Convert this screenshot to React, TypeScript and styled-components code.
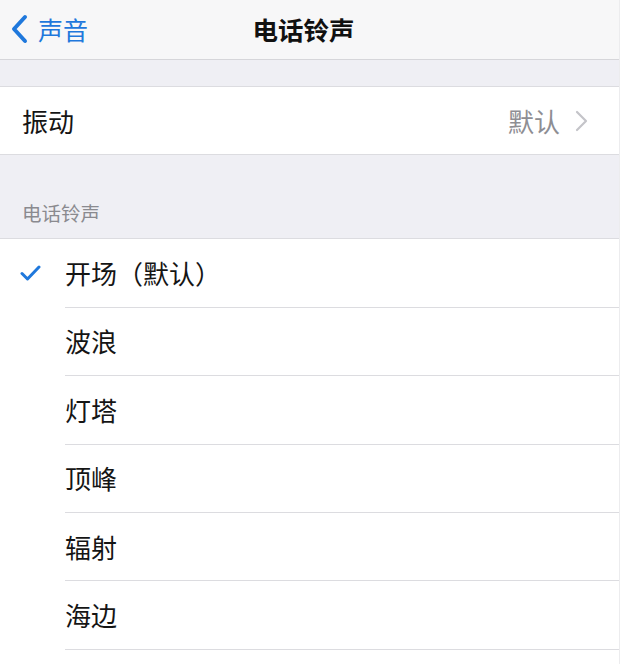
import React from 'react';
import styled, { createGlobalStyle } from 'styled-components';

const GlobalStyle = createGlobalStyle`
  html, body {
    margin: 0;
    padding: 0;
    background: #fff;
  }
  body {
    font-family: "Noto Sans CJK SC", "Noto Sans", sans-serif;
    -webkit-font-smoothing: antialiased;
  }
`;

// Styles
const Screen = styled.div`
  width: 619px;
  height: 664px;
  background: #efeff4;
  border-right: 1px solid #ececee;
  overflow: hidden;
`;

const NavBar = styled.div`
  height: 59px;
  background: #f7f7f8;
  border-bottom: 1px solid #d6d6da;
  display: grid;
  grid-template-columns: 1fr auto 1fr;
  align-items: center;
`;

const BackButton = styled.a`
  display: flex;
  align-items: center;
  gap: 9px;
  padding-left: 9px;
  color: #1f78dc;
  font-size: 25px;
  text-decoration: none;
  line-height: 1;
  margin-top: -1px;

  svg {
    width: 20px;
    height: 30px;
  }
`;

const Title = styled.div`
  font-size: 25.5px;
  font-weight: 700;
  color: #111;
  margin-top: -2px;
  transform: translateX(-6px);
`;

const Spacer = styled.div<{ $h: number }>`
  height: ${(p) => p.$h}px;
`;

const Group = styled.div`
  background: #fff;
  border-top: 1px solid #dcdce0;
  border-bottom: 1px solid #dcdce0;
`;

const SectionHeader = styled.div`
  height: 83px;
  display: flex;
  align-items: flex-end;
  padding: 0 0 11px 22px;
  box-sizing: border-box;
  font-size: 19.5px;
  color: #8a8a8f;
`;

const Row = styled.div<{ $inset: number }>`
  display: flex;
  align-items: center;
  height: 67.4px;
  padding-left: ${(p) => p.$inset}px;
  padding-right: 31px;
  font-size: 26px;
  color: #151515;
  position: relative;

  & + &::before {
    content: '';
    position: absolute;
    top: -1px;
    left: ${(p) => p.$inset}px;
    right: 0;
    height: 1px;
    background: #dcdce0;
  }

  & + & {
    margin-top: 1px;
  }
`;

const Label = styled.span`
  flex: 1;
  margin-top: -1px;
`;

const Detail = styled.span`
  color: #8e8e93;
  font-size: 26px;
  margin-right: 15px;
`;

const Check = styled.span`
  position: absolute;
  left: 20px;
  top: 50%;
  transform: translateY(-50%);
  display: flex;

  svg {
    width: 21px;
    height: 16px;
  }
`;

const Chevron = () => (
  <svg width="13" height="22" viewBox="0 0 13 22">
    <path d="M2 2 L11 11 L2 20" fill="none" stroke="#c4c4c9" strokeWidth="2.2" strokeLinecap="round" strokeLinejoin="round" />
  </svg>
);

const ringtones = ['开场（默认）', '波浪', '灯塔', '顶峰', '辐射', '海边', ''];

const App: React.FC = () => {
  return (
    <>
      <GlobalStyle />
      <Screen>
        <NavBar>
          <BackButton href="#">
            <svg viewBox="0 0 20 30">
              <path d="M16 3 L5 15 L16 27" fill="none" stroke="#1f78dc" strokeWidth="4" strokeLinecap="round" strokeLinejoin="round" />
            </svg>
            声音
          </BackButton>
          <Title>电话铃声</Title>
          <div />
        </NavBar>
        <Spacer $h={26} />
        <Group>
          <Row $inset={22}>
            <Label>振动</Label>
            <Detail>默认</Detail>
            <Chevron />
          </Row>
        </Group>
        <SectionHeader>电话铃声</SectionHeader>
        <Group>
          {ringtones.map((name, i) => (
            <Row key={i} $inset={65}>
              {i === 0 && (
                <Check>
                  <svg viewBox="0 0 21 16">
                    <path d="M2 8.5 L7.5 14 L19 2" fill="none" stroke="#1f78dc" strokeWidth="3" strokeLinecap="round" strokeLinejoin="round" />
                  </svg>
                </Check>
              )}
              <Label>{name}</Label>
            </Row>
          ))}
        </Group>
      </Screen>
    </>
  );
};

export default App;
